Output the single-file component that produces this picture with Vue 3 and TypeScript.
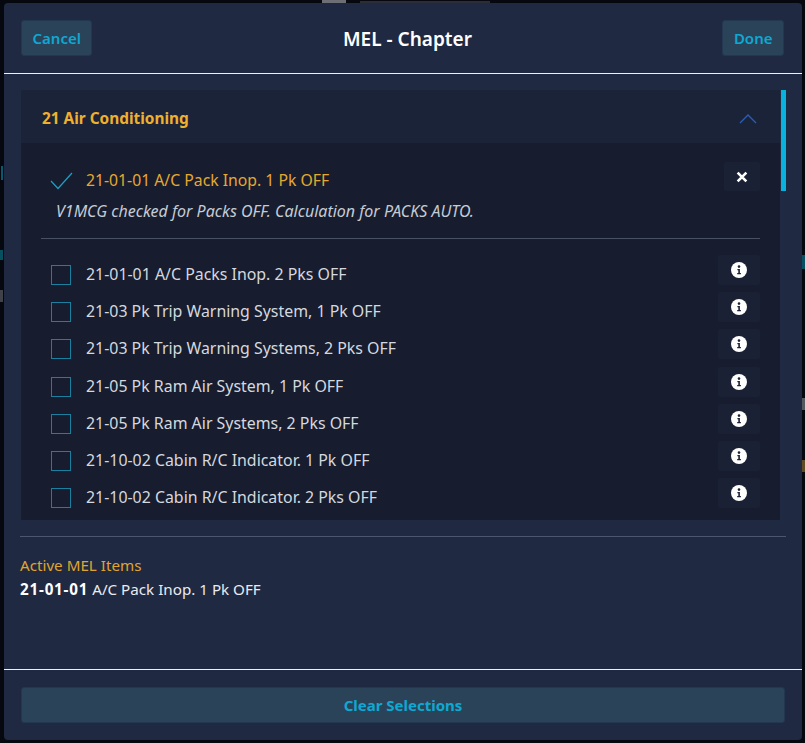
<template>
  <div class="page">
    <span
      v-for="(bit, i) in backdrop"
      :key="i"
      class="backdrop-bit"
      :style="{ left: bit.x + 'px', top: bit.y + 'px', width: bit.w + 'px', height: bit.h + 'px', background: bit.color }"
    ></span>
    <div class="modal">
      <header class="modal-header">
        <button type="button" class="btn">Cancel</button>
        <h1>MEL - Chapter</h1>
        <button type="button" class="btn">Done</button>
      </header>

      <div class="modal-body">
        <div class="scroller">
          <section class="chapter">
            <div class="chapter-head">
              <span>21 Air Conditioning</span>
              <svg class="chevron" width="18" height="12" viewBox="0 0 18 12">
                <path d="M1 11 L9 3 L17 11" fill="none" stroke="currentColor" stroke-width="1.3" />
              </svg>
            </div>
            <div class="chapter-body">
              <div class="selected">
                <div class="selected-row">
                  <svg class="check" width="23" height="18" viewBox="0 0 23 18">
                    <path d="M1 9 L8 16.5 L22 1" fill="none" stroke="currentColor" stroke-width="1.2" />
                  </svg>
                  <span class="selected-name">{{ selected.name }}</span>
                  <button type="button" class="icon-btn close">
                    <svg width="12" height="12" viewBox="0 0 11 11">
                      <path d="M1.5 1.5 L9.5 9.5 M9.5 1.5 L1.5 9.5" fill="none" stroke="currentColor" stroke-width="2.4" />
                    </svg>
                  </button>
                </div>
                <p class="note">{{ selected.note }}</p>
              </div>

              <ul class="items">
                <li v-for="item in items" :key="item" class="item">
                  <span class="box"></span>
                  <span class="item-name">{{ item }}</span>
                  <button type="button" class="icon-btn info">
                    <svg width="16" height="16" viewBox="0 0 16 16">
                      <circle cx="8" cy="8" r="8" fill="#fff" />
                      <circle cx="8" cy="4.6" r="1.3" fill="#1a2136" />
                      <path d="M6.4 7h2.5v4h1v1.3H6.2V11h1.1V8.2h-.9z" fill="#1a2136" />
                    </svg>
                  </button>
                </li>
              </ul>
            </div>
          </section>
          <div class="scrollbar"><div class="thumb"></div></div>
        </div>

        <div class="active">
          <div class="active-title">Active MEL Items</div>
          <div class="active-item"><strong>21-01-01</strong> A/C Pack Inop. 1 Pk OFF</div>
        </div>
      </div>

      <footer class="modal-footer">
        <button type="button" class="btn wide">Clear Selections</button>
      </footer>
    </div>
  </div>
</template>

<script setup lang="ts">
const selected = {
  name: "21-01-01 A/C Pack Inop. 1 Pk OFF",
  note: "V1MCG checked for Packs OFF. Calculation for PACKS AUTO.",
};

const items: string[] = [
  "21-01-01 A/C Packs Inop. 2 Pks OFF",
  "21-03 Pk Trip Warning System, 1 Pk OFF",
  "21-03 Pk Trip Warning Systems, 2 Pks OFF",
  "21-05 Pk Ram Air System, 1 Pk OFF",
  "21-05 Pk Ram Air Systems, 2 Pks OFF",
  "21-10-02 Cabin R/C Indicator. 1 Pk OFF",
  "21-10-02 Cabin R/C Indicator. 2 Pks OFF",
];

// bits of the page behind the dialog that show at its edges
const backdrop = [
  { x: 322, y: 0, w: 24, h: 3, color: "#6d6f74" },
  { x: 360, y: 1, w: 130, h: 2, color: "#2b2e36" },
  { x: 1, y: 166, w: 2, h: 14, color: "#085870" },
  { x: 0, y: 250, w: 3, h: 10, color: "#07505f" },
  { x: 0, y: 290, w: 3, h: 12, color: "#3f4248" },
  { x: 802, y: 255, w: 3, h: 14, color: "#07505f" },
  { x: 802, y: 398, w: 3, h: 12, color: "#55585e" },
  { x: 802, y: 460, w: 3, h: 12, color: "#5f4b26" },
];
</script>

<style>
html,
body {
  margin: 0;
  background: #05080f;
}
</style>

<style scoped>
.page {
  position: relative;
  width: 805px;
  height: 743px;
  box-sizing: border-box;
  padding: 3px 3px 3px 4px;
  overflow: hidden;
  font-family: "Noto Sans", "Open Sans", sans-serif;
}

.backdrop-bit {
  position: absolute;
}

.modal {
  position: relative;
  height: 100%;
  display: flex;
  flex-direction: column;
  background: #1f2942;
  border-radius: 4px;
  color: #d8dce3;
}

.modal-header {
  flex: none;
  height: 71px;
  box-sizing: border-box;
  padding: 17px 18px 0 17px;
  display: flex;
  justify-content: space-between;
  align-items: flex-start;
  border-bottom: 1px solid #eef0f6;
}

.modal-header h1 {
  margin: 6px 0 0;
  font-size: 19px;
  line-height: 26px;
  font-weight: 600;
  color: #fff;
}

.btn {
  height: 36px;
  padding: 0 10.5px;
  border: 1px solid #223850;
  border-radius: 3px;
  background: #2a4359;
  color: #0fa8d2;
  font-family: inherit;
  font-size: 15px;
  font-weight: 600;
}

.btn.wide {
  width: 100%;
  font-size: 15px;
  font-weight: 700;
}

.modal-body {
  flex: 1;
  min-height: 0;
  padding: 16px 16px 0 16px;
  display: flex;
  flex-direction: column;
}

.scroller {
  flex: none;
  height: 430px;
  display: flex;
  overflow: hidden;
  padding-bottom: 16px;
  border-bottom: 1px solid #4d566f;
}

.chapter {
  flex: 1;
  min-width: 0;
  margin-left: 1px;
  overflow: hidden;
}

.chapter-head {
  height: 53px;
  box-sizing: border-box;
  padding: 3px 23px 0 21px;
  display: flex;
  align-items: center;
  justify-content: space-between;
  background: #1b2338;
  color: #efb02e;
  font-size: 15.4px;
  font-weight: 700;
}

.chevron {
  color: #2a5db5;
}

.chapter-body {
  height: 377px;
  box-sizing: border-box;
  padding: 0 20px;
  overflow: hidden;
  background: #171d2f;
}

.selected {
  padding: 19px 0 17px;
  border-bottom: 1px solid #4a5064;
}

.selected-row {
  display: flex;
  align-items: flex-start;
  height: 29px;
  padding-left: 9px;
}

.check {
  color: #1f9fc4;
  margin: 10px 13px 0 0;
  flex: none;
}

.selected-name {
  flex: 1;
  margin-top: 7px;
  font-size: 15.75px;
  line-height: 22px;
  color: #e6a92f;
}

.note {
  margin: 10px 0 0 15px;
  font-size: 16px;
  line-height: 20px;
  font-style: italic;
  color: #c6cbd4;
}

.icon-btn {
  flex: none;
  padding: 0;
  border: 0;
  display: flex;
  align-items: center;
  justify-content: center;
  background: #1a2135;
  border-radius: 2px;
}

.close {
  width: 36px;
  height: 29px;
  color: #fff;
}

.items {
  list-style: none;
  margin: 0;
  padding: 16px 0 0;
}

.item {
  height: 37.2px;
  display: flex;
  align-items: flex-start;
  padding-left: 10px;
}

.box {
  flex: none;
  width: 18px;
  height: 18px;
  margin-top: 10px;
  margin-right: 15px;
  border: 1px solid #1d7f9f;
}

.item-name {
  flex: 1;
  margin-top: 8px;
  font-size: 15.9px;
  line-height: 22px;
  color: #d5d8df;
}

.info {
  width: 42px;
  height: 30px;
}

.scrollbar {
  flex: none;
  width: 5px;
  margin-left: 1px;
  background: #1f2942;
}

.thumb {
  height: 101px;
  background: #08b2dc;
}

.active {
  padding: 16px 0 0;
}

.active-title {
  font-size: 15.2px;
  line-height: 24px;
  color: #e0a52f;
}

.active-item {
  font-size: 15.2px;
  line-height: 24px;
  color: #e9ebef;
}

.active-item strong {
  color: #fff;
  font-weight: 700;
  letter-spacing: 0.8px;
}

.modal-footer {
  flex: none;
  height: 71px;
  box-sizing: border-box;
  padding: 17px 17px 0 17px;
  border-top: 1px solid #eef0f6;
}
</style>
